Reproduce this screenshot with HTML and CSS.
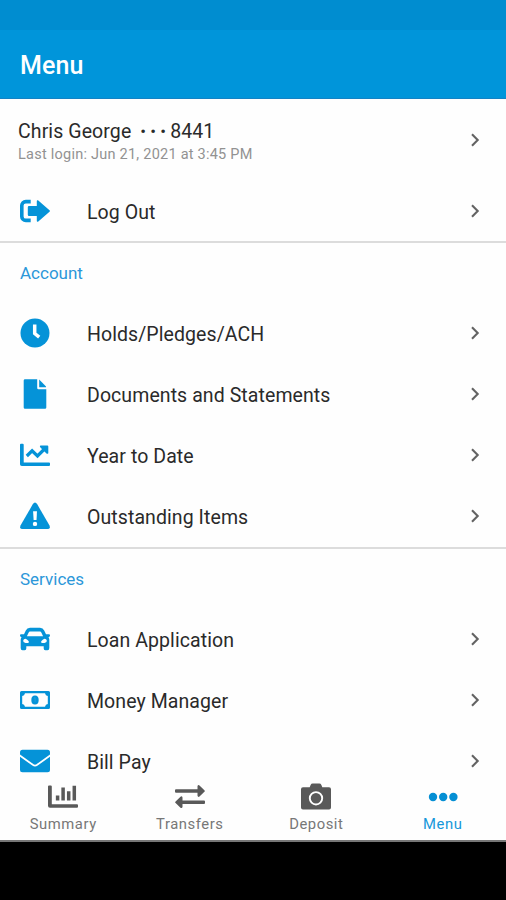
FILE: index.html
```html
<!DOCTYPE html>
<html lang="en">
<head>
  <meta charset="UTF-8" />
  <meta name="viewport" content="width=device-width, initial-scale=1" />
  <title>Menu</title>
  <link rel="stylesheet" href="styles.css">
</head>
<body>

<svg class="defs">
  <symbol id="chevron" viewBox="0 0 10 14">
    <path d="M1.5 1.3L7.2 7l-5.7 5.7" fill="none" stroke="#636363" stroke-width="2.1" />
  </symbol>
</svg>

<div class="status-bar"></div>
<header class="header">
  <h1>Menu</h1>
</header>

<main class="content">
  <section class="section">
    <a class="profile">
      <div class="profile-info">
        <div class="profile-name"><span>Chris George</span><span class="dots">•••</span><span>8441</span></div>
        <div class="last-login">Last login: Jun 21, 2021 at 3:45 PM</div>
      </div>
      <svg class="chevron"><use href="#chevron" /></svg>
    </a>
    <a class="row">
      <svg class="icon" viewBox="0 0 30 30">
        <path d="M10.7 5.6H5.8A4 4 0 0 0 1.8 9.6V20.4A4 4 0 0 0 5.8 24.4H10.7" fill="none" stroke="#0593d8" stroke-width="3.6" />
        <path d="M18 4.3L29.2 14a1.2 1.2 0 0 1 0 2L18 25.7q-1.2.5-1.2-1V20H9q-1.2 0-1.2-1.2v-7.6Q7.8 10 9 10h7.8V5.3q0-1.5 1.2-1z" />
      </svg>
      <span class="label">Log Out</span>
      <svg class="chevron"><use href="#chevron" /></svg>
    </a>
  </section>

  <section class="section">
    <h2>Account</h2>
    <a class="row">
      <svg class="icon" viewBox="0 0 30 30">
        <circle cx="15" cy="15" r="14.5" />
        <path d="M14.7 6.5v9l4.5 3.7" fill="none" stroke="#fff" stroke-width="3.5" />
      </svg>
      <span class="label">Holds/Pledges/ACH</span>
      <svg class="chevron"><use href="#chevron" /></svg>
    </a>
    <a class="row">
      <svg class="icon" viewBox="0 0 30 30">
        <path d="M5 .3H17.2V9q0 1.200 1.200 1.200H26.300V28.500q0 1.300-1.300 1.300H5q-1.300 0-1.300-1.300V1.600Q3.700.3 5 .3z" />
        <path d="M19.200.5L26 7.500V8.300H19.200z" />
      </svg>
      <span class="label">Documents and Statements</span>
      <svg class="chevron"><use href="#chevron" /></svg>
    </a>
    <a class="row">
      <svg class="icon" viewBox="0 0 30 30">
        <path d="M1 3.800H2.700q1 0 1 1V22.400H29q1 0 1 1v1.700q0 1-1 1H1.800Q0 26.100 0 24.300V4.800q0-1 1-1z" />
        <path d="M6.800 16l5.300-5.200 5.400 5.200 8-8" fill="none" stroke="#0593d8" stroke-width="3.2" />
        <path d="M20.400 5.500H27.300q1 0 1 1v6.800q-1 1-1.800.2L20.200 7.200q-.8-1.100.2-1.700z" />
      </svg>
      <span class="label">Year to Date</span>
      <svg class="chevron"><use href="#chevron" /></svg>
    </a>
    <a class="row">
      <svg class="icon" viewBox="0 0 30 30">
        <path d="M12.900 3.100q2.100-3.200 4.200 0L29.500 24.500q1.200 3.500-2 3.500h-25q-3.200 0-2-3.500z" />
        <path d="M13.100 10.300h3.900l-.5 8.700h-2.900z" fill="#fff" />
        <circle cx="15" cy="22.900" r="2.200" fill="#fff" />
      </svg>
      <span class="label">Outstanding Items</span>
      <svg class="chevron"><use href="#chevron" /></svg>
    </a>
  </section>

  <section class="section">
    <h2>Services</h2>
    <a class="row">
      <svg class="icon" viewBox="0 0 30 30">
        <path fill-rule="evenodd" d="M10 3.800H20q3 0 4.200 2.600L26 10.300h3q1.200.2 1 1.200-.3 1.800-1.500 1.800.8 1 .8 2.500V24q0 2.200-1.800 2.200H25.300q-1.600 0-1.600-1.800V22.200H6.300v2.200q0 1.800-1.600 1.800H2.500Q.7 26.200.7 24V15.800q0-1.500.8-2.500Q.3 13.300 0 11.500q-.2-1 1-1.200H4L5.800 6.400Q7 3.800 10 3.800zM10 7.500q-.9 0-1.300.9L6.900 12.300H23.100L21.300 8.400q-.4-.9-1.300-.9zM5.500 14.800c-3 0-3 4.100 0 4.100 4.700.8 4.400-1.900 0-4.100zM24.500 14.800c-4.400 2.200-4.700 4.900 0 4.100 3 0 3-4.100 0-4.100z" />
      </svg>
      <span class="label">Loan Application</span>
      <svg class="chevron"><use href="#chevron" /></svg>
    </a>
    <a class="row">
      <svg class="icon" viewBox="0 0 30 30">
        <path fill-rule="evenodd" d="M1.500 6H28.500Q30 6 30 7.500v15Q30 24 28.500 24H1.500Q0 24 0 22.500V7.500Q0 6 1.500 6zM5 8.200Q4.500 10.700 2.200 11v8Q4.500 19.300 5 21.800H25q.5-2.500 2.800-2.800V11Q25.500 10.700 25 8.200z" />
        <ellipse cx="15" cy="15" rx="3.7" ry="4.5" />
        <path d="M14.100 13.200l1-.6v4.200" fill="none" stroke="#2fa5df" stroke-width=".7" />
      </svg>
      <span class="label">Money Manager</span>
      <svg class="chevron"><use href="#chevron" /></svg>
    </a>
    <a class="row">
      <svg class="icon" viewBox="0 0 30 30">
        <rect y="3.7" width="30" height="22.6" rx="2.5" />
        <path d="M-.5 9.200L12.800 18.800q2.200 1.500 4.400 0L30.500 9.200" fill="none" stroke="#fff" stroke-width="1.8" />
      </svg>
      <span class="label">Bill Pay</span>
      <svg class="chevron"><use href="#chevron" /></svg>
    </a>
  </section>
</main>

<nav class="tabs">
  <a class="tab">
    <svg class="icon" viewBox="0 0 30 30">
      <path d="M1 3.500H2.800q1 0 1 1V22.200H29q1 0 1 1v1.600q0 1-1 1H2Q0 25.800 0 23.800V4.500q0-1 1-1z" />
      <path d="M9.600 18.500v-5M15.100 18.500V5.500M20.700 18.500V9.300M26.300 18.500V3.700" fill="none" stroke="#595959" stroke-width="3.5" />
    </svg>
    <span>Summary</span>
  </a>
  <a class="tab">
    <svg class="icon" viewBox="0 0 30 30">
      <path d="M1 7.200H22.500V4.200q.5-1.800 2-.7L29.400 8.200q.9.800 0 1.600L24.500 14.500q-1.500 1.100-2-.7V10.800H1Q0 10.800 0 9.800V8.200Q0 7.200 1 7.200z" />
      <path d="M29 18.400H7.500V15.400q-.5-1.800-2-.7L.6 19.400q-.9.800 0 1.600L5.500 25.700q1.500 1.100 2-.7V22H29q1 0 1-1V19.400q0-1-1-1z" />
    </svg>
    <span>Transfers</span>
  </a>
  <a class="tab">
    <svg class="icon" viewBox="0 0 30 30">
      <path d="M2 5.200H8.700L9.600 2.900Q10.200 1.500 11.800 1.500H18.200q1.600 0 2.200 1.400l.9 2.300H28q2 0 2 2V25.500q0 2-2 2H2q-2 0-2-2V7.200q0-2 2-2z" />
      <circle cx="15" cy="16.300" r="6.200" fill="none" stroke="#fff" stroke-width="1.900" />
    </svg>
    <span>Deposit</span>
  </a>
  <a class="tab active">
    <svg class="icon" viewBox="0 0 30 30">
      <circle cx="5" cy="15" r="4.200" />
      <circle cx="15.200" cy="15" r="4.200" />
      <circle cx="25.400" cy="15" r="4.200" />
    </svg>
    <span>Menu</span>
  </a>
</nav>

</body>
</html>
```

FILE: styles.css
```css
* {
  box-sizing: border-box;
}
body {
  margin: 0;
  height: 900px;
  display: flex;
  flex-direction: column;
  overflow: hidden;
  background: #000;
  font-family: Roboto, 'Liberation Sans', sans-serif;
  color: #2a2a2a;
}
h1, h2 {
  margin: 0;
}
.defs {
  display: none;
}
.status-bar {
  height: 30px;
  flex: none;
  background: #008dd0;
}
.header {
  height: 69px;
  flex: none;
  padding: 3px 20px 0;
  display: flex;
  align-items: center;
  background: #0095da;
  border-bottom: 1px solid #1482c4;
}
.header h1 {
  color: #fff;
  font-size: 25px;
  font-weight: 500;
  letter-spacing: 0.1px;
}
.content {
  height: 677px;
  flex: none;
  overflow: hidden;
  background: #fefefe;
}
.section {
  border-bottom: 2px solid #dcdcdc;
}
.section h2 {
  height: 59px;
  padding: 1px 20px 0;
  display: flex;
  align-items: center;
  font-size: 17px;
  font-weight: 400;
  color: #2c97d9;
}
.profile {
  height: 81px;
  padding: 1px 25px 0 18px;
  display: flex;
  align-items: center;
  justify-content: space-between;
}
.profile-info {
  padding-top: 3px;
}
.profile-name {
  display: flex;
  font-size: 19.5px;
  line-height: 25px;
  letter-spacing: 0.1px;
}
.dots {
  margin: 0 0 0 9px;
  font-size: 17px;
  letter-spacing: 4.2px;
}
.last-login {
  font-size: 14.5px;
  line-height: 21px;
  letter-spacing: 0.24px;
  color: #929292;
}
.row {
  height: 61.2px;
  padding: 0 25px 0 20px;
  display: flex;
  align-items: center;
}
.icon {
  width: 30px;
  height: 30px;
  flex: none;
  fill: #0593d8;
}
.label {
  flex: 1;
  margin-left: 37px;
  padding-top: 3px;
  font-size: 19.5px;
  letter-spacing: 0.08px;
}
.chevron {
  width: 11px;
  height: 14px;
  flex: none;
}
.tabs {
  height: 66px;
  flex: none;
  display: flex;
  background: #fefefe;
  border-bottom: 2px solid #777;
}
.tab {
  flex: 1;
  padding-top: 6px;
  display: flex;
  flex-direction: column;
  align-items: center;
  font-size: 14.8px;
  line-height: 24px;
  letter-spacing: 0.55px;
  color: #777;
}
.tab .icon {
  fill: #595959;
}
.tab.active {
  color: #1597da;
}
.tab.active .icon {
  fill: #058fd4;
}
```
